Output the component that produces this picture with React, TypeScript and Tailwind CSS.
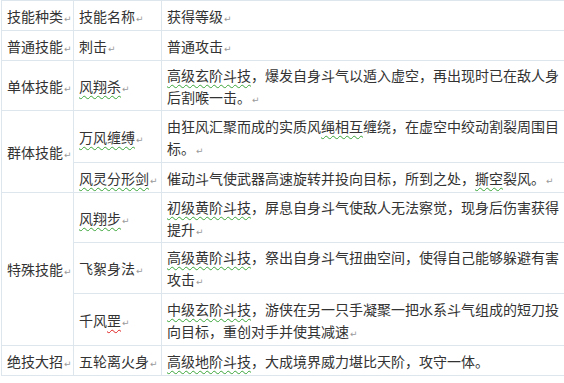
const font = { fontFamily: '"Noto Sans CJK SC", "Noto Sans", sans-serif' }

function Mark() {
  return <span className="ml-px font-['DejaVu_Sans'] text-[9px] leading-none text-[#9a9a9a]">↵</span>
}

function Spell({ children, red }: { children: React.ReactNode; red?: boolean }) {
  return (
    <span
      className={
        red
          ? "underline decoration-wavy decoration-[#e02020] decoration-1 underline-offset-[3px]"
          : "underline decoration-wavy decoration-[#3aa53a] decoration-1 underline-offset-[3px]"
      }
    >
      {children}
    </span>
  )
}

const cell = "border border-[#dde6ec] px-[5px] py-0 align-middle whitespace-nowrap"

export default function App() {
  return (
    <div className="h-[383px] w-[564px] overflow-hidden bg-white pl-px text-[14px] leading-[22px] text-[#333]" style={font}>
      <table className="w-[563px] table-fixed border-collapse">
        <colgroup>
          <col className="w-[72px]" />
          <col className="w-[88px]" />
          <col className="w-[403px]" />
        </colgroup>
        <tbody>
          <tr className="h-[30px]">
            <td className={cell}>技能种类<Mark /></td>
            <td className={cell}>技能名称<Mark /></td>
            <td className={cell}>获得等级<Mark /></td>
          </tr>
          <tr className="h-[30px]">
            <td className={cell}>普通技能<Mark /></td>
            <td className={cell}>刺击<Mark /></td>
            <td className={cell}>普通攻击<Mark /></td>
          </tr>
          <tr className="h-[50px]">
            <td className={cell}>单体技能<Mark /></td>
            <td className={cell}><Spell>风翔杀</Spell><Mark /></td>
            <td className={cell}>
              <Spell>高级玄阶斗技</Spell>，爆发自身斗气以遁入虚空，再出现时已在敌人身
              <br />
              后割喉一击。<Mark />
            </td>
          </tr>
          <tr className="h-[52px]">
            <td className={cell} rowSpan={2}>群体技能<Mark /></td>
            <td className={cell}><Spell>万风缠缚</Spell><Mark /></td>
            <td className={cell}>
              由狂风汇聚而成的实质风<Spell>绳相互</Spell>缠绕，在虚空中绞动割裂周围目
              <br />
              标。<Mark />
            </td>
          </tr>
          <tr className="h-[30px]">
            <td className={cell}><Spell>风灵分形剑</Spell><Mark /></td>
            <td className={cell}>
              催动斗气使武器高速旋转并投向目标，所到之处，<Spell>撕空</Spell>裂风。<Mark />
            </td>
          </tr>
          <tr className="h-[50px]">
            <td className={cell} rowSpan={3}>特殊技能<Mark /></td>
            <td className={cell}><Spell>风翔步</Spell><Mark /></td>
            <td className={cell}>
              <Spell>初级黄阶斗技</Spell>，屏息自身斗气使敌人无法察觉，现身后伤害获得
              <br />
              提升<Mark />
            </td>
          </tr>
          <tr className="h-[51px]">
            <td className={cell}>飞絮身法<Mark /></td>
            <td className={cell}>
              <Spell>高级黄阶斗技</Spell>，祭出自身斗气扭曲空间，使得自己能够躲避有害
              <br />
              攻击<Mark />
            </td>
          </tr>
          <tr className="h-[52px]">
            <td className={cell}>千风<Spell red>罡</Spell><Mark /></td>
            <td className={cell}>
              <Spell>中级玄阶斗技</Spell>，游侠在另一只手凝聚一把水系斗气组成的短刀投
              <br />
              向目标，重创对手并使其减速<Mark />
            </td>
          </tr>
          <tr className="h-[30px]">
            <td className={cell}>绝技大招<Mark /></td>
            <td className={cell}>五轮离火身<Mark /></td>
            <td className={cell}>
              <Spell>高级地阶斗技</Spell>，大成境界威力堪比天阶，攻守一体。
            </td>
          </tr>
        </tbody>
      </table>
    </div>
  )
}
